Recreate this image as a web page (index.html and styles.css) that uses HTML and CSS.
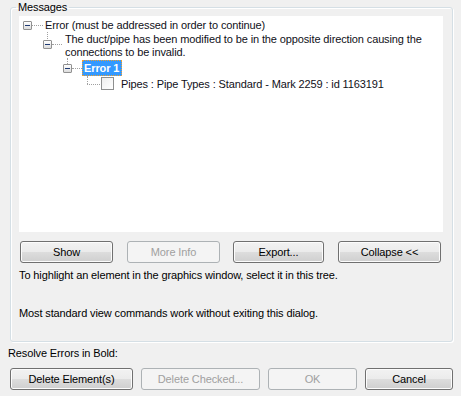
FILE: index.html
```html
<!DOCTYPE html>
<html>
<head>
<meta charset="utf-8">
<link rel="stylesheet" href="styles.css">
</head>
<body>
<div class="dialog">
  <fieldset class="group">
    <legend class="group-title">Messages</legend>
    <div class="tree">
      <div class="row row1">
        <span class="exp"></span><span class="hline h1"></span>
        <span class="label">Error (must be addressed in order to continue)</span>
      </div>
      <div class="row row2">
        <span class="vline v2"></span>
        <span class="exp"></span><span class="hline h2"></span>
        <span class="label multi">The duct/pipe has been modified to be in the opposite direction causing the<br>connections to be invalid.</span>
      </div>
      <div class="row row3">
        <span class="vline v3"></span>
        <span class="exp"></span><span class="hline h3"></span>
        <span class="label selected">Error 1</span>
      </div>
      <div class="row row4">
        <span class="vline v4"></span>
        <span class="hline h4"></span><span class="check"></span>
        <span class="label">Pipes : Pipe Types : Standard - Mark 2259 : id 1163191</span>
      </div>
    </div>
    <div class="btn-row">
      <button class="btn w-show">Show</button>
      <button class="btn w-more" disabled>More Info</button>
      <button class="btn w-export">Export...</button>
      <button class="btn w-collapse">Collapse &lt;&lt;</button>
    </div>
    <p class="hint hint1">To highlight an element in the graphics window, select it in this tree.</p>
    <p class="hint hint2">Most standard view commands work without exiting this dialog.</p>
  </fieldset>
  <p class="resolve">Resolve Errors in Bold:</p>
  <div class="bottom-row">
    <button class="btn w-delete">Delete Element(s)</button>
    <button class="btn w-checked" disabled>Delete Checked...</button>
    <button class="btn w-ok" disabled>OK</button>
    <button class="btn w-cancel">Cancel</button>
  </div>
</div>
</body>
</html>
```

FILE: styles.css
```css
html, body {
  margin: 0;
  padding: 0;
  background: #f0f0f0;
}
body {
  width: 461px;
  height: 396px;
  overflow: hidden;
  font-family: "Liberation Sans", Arial, sans-serif;
  font-size: 11px;
  letter-spacing: -0.12px;
  color: #000;
}
.dialog {
  padding: 0 8px 0 10px;
}
.group {
  margin: 0;
  padding: 0 9px 21px 8px;
  min-width: 0;
  border: 1px solid #d5dfe5;
  border-radius: 3px;
  box-shadow: inset 1px 1px 0 #fff, 1px 1px 0 #fff;
}
.group-title {
  margin-left: -3px;
  padding: 0 2px;
  line-height: 14px;
  height: 14px;
}
.tree {
  margin-top: 2px;
  height: 216px;
  background: #fff;
  padding-top: 2px;
  box-sizing: border-box;
}
.row {
  position: relative;
  display: flex;
  align-items: flex-start;
  line-height: 14px;
}
.row1 { height: 14px; padding-left: 4px; }
.row2 { height: 27px; padding-left: 24px; margin-top: 1px; }
.row3 { height: 16px; padding-left: 44px; }
.row4 { height: 14px; padding-left: 68px; margin-top: 1px; }

.exp {
  width: 7px;
  height: 7px;
  border: 1px solid #919191;
  border-radius: 1px;
  background: linear-gradient(#ffffff, #dcdcdc);
  position: relative;
  flex: none;
}
.exp::after {
  content: "";
  position: absolute;
  left: 1px;
  top: 3px;
  width: 5px;
  height: 1px;
  background: #1f3a72;
}
.row1 .exp { margin-top: 3px; }
.row2 .exp { margin-top: 7px; }
.row3 .exp { margin-top: 4px; }

.hline {
  flex: none;
  height: 0;
  border-top: 1px dotted #a0a0a0;
}
.h1 { width: 11px; margin-top: 7px; margin-right: 2px; }
.h2 { width: 10px; margin-top: 11px; margin-right: 3px; }
.h3 { width: 10px; margin-top: 8px; }
.h4 { width: 13px; margin-top: 7px; }

.vline {
  position: absolute;
  width: 0;
  border-left: 1px dotted #a0a0a0;
}
.v2 { left: 28px; top: -1px; height: 7px; }
.v3 { left: 48px; top: -2px; height: 6px; }
.v4 { left: 68px; top: -1px; height: 8px; }

.label {
  white-space: nowrap;
  color: #101018;
}
.multi {
  line-height: 13px;
}
.selected {
  background: #3399ff;
  color: #fff;
  font-weight: bold;
  padding: 1px 3px 1px 2px;
  line-height: 14px;
  outline: 1px dotted #f0a030;
  outline-offset: -1px;
}
.check {
  flex: none;
  width: 11px;
  height: 11px;
  border: 1px solid #8e8f8f;
  background: linear-gradient(135deg, #ededed, #ffffff);
  margin-left: 1px;
  margin-right: 7px;
  margin-top: 0;
}

.btn-row {
  display: flex;
  margin-top: 9px;
  padding-left: 1px;
}
.btn {
  box-sizing: border-box;
  height: 22px;
  padding: 0;
  font: inherit;
  letter-spacing: inherit;
  color: #000;
  border: 1px solid #707070;
  border-radius: 3px;
  background: linear-gradient(#f2f2f2 0%, #ebebeb 50%, #dddddd 51%, #cfcfcf 100%);
  box-shadow: inset 0 0 0 1px #fcfcfc;
  flex: none;
}
.btn:disabled {
  border-color: #adb2b5;
  background: #f4f4f4;
  color: #a0a0a0;
  box-shadow: none;
}
.w-show { width: 93px; }
.w-more { width: 93px; margin-left: 14px; }
.w-export { width: 91px; margin-left: 13px; }
.w-collapse { width: 103px; margin-left: 14px; }

.hint {
  margin: 0;
  line-height: 13px;
}
.hint1 { margin-top: 6px; }
.hint2 { margin-top: 25px; }

.resolve {
  margin: 5px 0 0 -2px;
  line-height: 13px;
}
.bottom-row {
  display: flex;
  gap: 8px;
  margin-top: 8px;
}
.w-delete { width: 123px; }
.w-checked { width: 119px; }
.w-ok { width: 89px; }
.w-cancel { width: 88px; }
```
